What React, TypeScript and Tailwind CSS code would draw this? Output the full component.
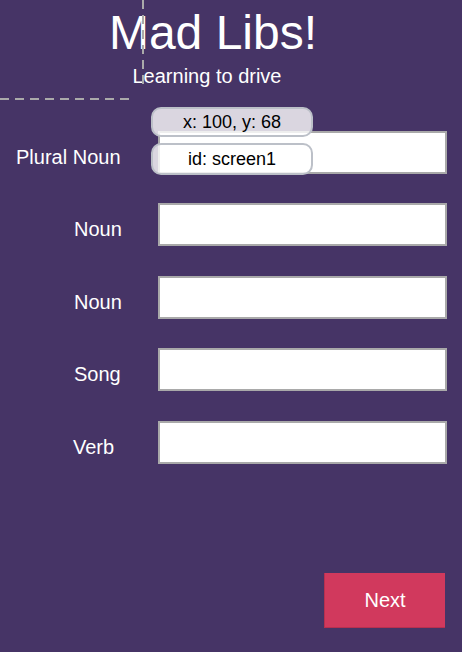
import React from "react";

const fields = [
  { label: "Plural Noun", pad: "pl-[16px]" },
  { label: "Noun", pad: "pl-[74px]" },
  { label: "Noun", pad: "pl-[74px]" },
  { label: "Song", pad: "pl-[74px]" },
  { label: "Verb", pad: "pl-[73px]" },
];

export default function App() {
  return (
    <div className="relative w-[462px] h-[652px] overflow-hidden bg-[#463466] text-white font-['Liberation_Sans',Arial,sans-serif]">
      {/* header */}
      <div className="pt-[9px]">
        <h1 className="w-[426px] text-center text-[48px] leading-[48px]">Mad Libs!</h1>
        <p className="mt-[9px] w-[414px] text-center text-[20px] leading-[20px]">Learning to drive</p>
      </div>

      {/* form rows */}
      <div className="mt-[45px] flex flex-col gap-[29.4px]">
        {fields.map((f, i) => (
          <div key={i} className="flex items-start">
            <div className={`w-[158px] h-[43px] flex items-center pt-[9px] text-[20px] ${f.pad}`}>
              {f.label}
            </div>
            <input
              type="text"
              className="w-[289px] h-[43px] bg-white border-2 border-[#a9a9a9] outline-none text-black"
            />
          </div>
        ))}
      </div>

      {/* next button */}
      <div className="mt-[109px] pr-[17px] flex justify-end">
        <button className="w-[121px] h-[55px] bg-[#d1395d] border-l border-b border-[#b7304f] text-white text-[20px]">
          Next
        </button>
      </div>

      {/* design-mode guides */}
      <svg className="absolute left-0 top-0" width="160" height="110">
        <line x1="143" y1="0" x2="143" y2="86" stroke="#aaaaaa" strokeWidth="2" strokeDasharray="9 6" />
        <line x1="0" y1="99" x2="135" y2="99" stroke="#aaaaaa" strokeWidth="2" strokeDasharray="9 6" />
      </svg>

      {/* selection tooltips */}
      <div className="absolute left-[151px] top-[107px] w-[162px] flex flex-col gap-[6px] text-black text-[18px]">
        <div className="h-[30px] rounded-[10px] border-2 border-[#bcc0c8] bg-white/80 flex items-center justify-center">
          x: 100, y: 68
        </div>
        <div className="h-[32px] rounded-[10px] border-2 border-[#bcc0c8] bg-white/80 flex items-center justify-center">
          id: screen1
        </div>
      </div>
    </div>
  );
}
